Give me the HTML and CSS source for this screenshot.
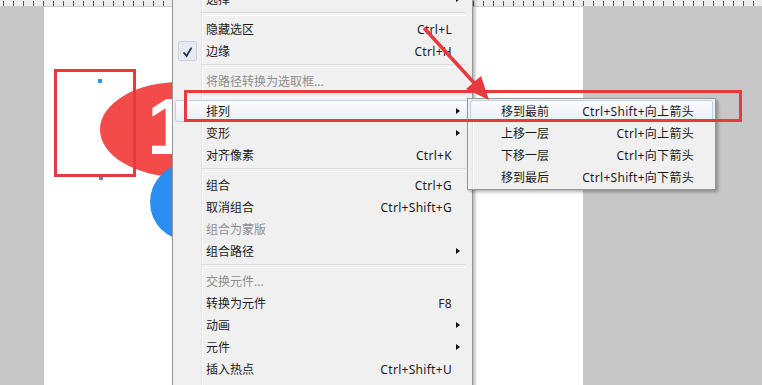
FILE: index.html
```html
<!DOCTYPE html>
<html lang="zh-CN">
<head>
    <meta charset="UTF-8">
    <title>排列</title>
    <link rel="stylesheet" href="styles.css">
</head>
<body>
    <div class="screen">
        <div class="ruler"></div>
        <div class="workspace">
            <div class="pasteboard left"></div>
            <div class="canvas">
                <div class="shape red-blob"></div>
                <div class="shape digit">1</div>
                <div class="shape blue-dot"></div>
                <span class="handle handle-top"></span>
                <span class="handle handle-bottom"></span>
            </div>
            <div class="pasteboard right"></div>
        </div>

        <ul class="menu main-menu">
            <li class="item"><span class="icon"></span><span class="label">选择</span><span class="key"></span><i class="arrow"></i></li>
            <li class="sep"></li>
            <li class="item"><span class="icon"></span><span class="label">隐藏选区</span><span class="key">Ctrl+L</span><i></i></li>
            <li class="item"><span class="icon"><span class="check"><svg width="17" height="18" viewBox="0 0 17 18"><path d="M4 9.5 L7.5 13.5 L13 4" fill="none" stroke="#1f2a6a" stroke-width="2"/></svg></span></span><span class="label">边缘</span><span class="key">Ctrl+H</span><i></i></li>
            <li class="sep"></li>
            <li class="item off"><span class="icon"></span><span class="label">将路径转换为选取框...</span><span class="key"></span><i></i></li>
            <li class="sep"></li>
            <li class="item hot"><span class="icon"></span><span class="label">排列</span><span class="key"></span><i class="arrow"></i></li>
            <li class="item"><span class="icon"></span><span class="label">变形</span><span class="key"></span><i class="arrow"></i></li>
            <li class="item"><span class="icon"></span><span class="label">对齐像素</span><span class="key">Ctrl+K</span><i></i></li>
            <li class="sep"></li>
            <li class="item"><span class="icon"></span><span class="label">组合</span><span class="key">Ctrl+G</span><i></i></li>
            <li class="item"><span class="icon"></span><span class="label">取消组合</span><span class="key">Ctrl+Shift+G</span><i></i></li>
            <li class="item off"><span class="icon"></span><span class="label">组合为蒙版</span><span class="key"></span><i></i></li>
            <li class="item"><span class="icon"></span><span class="label">组合路径</span><span class="key"></span><i class="arrow"></i></li>
            <li class="sep"></li>
            <li class="item off"><span class="icon"></span><span class="label">交换元件...</span><span class="key"></span><i></i></li>
            <li class="item"><span class="icon"></span><span class="label">转换为元件</span><span class="key">F8</span><i></i></li>
            <li class="item"><span class="icon"></span><span class="label">动画</span><span class="key"></span><i class="arrow"></i></li>
            <li class="item"><span class="icon"></span><span class="label">元件</span><span class="key"></span><i class="arrow"></i></li>
            <li class="item"><span class="icon"></span><span class="label">插入热点</span><span class="key">Ctrl+Shift+U</span><i></i></li>
        </ul>

        <ul class="menu sub-menu">
            <li class="sub-item hot"><span>移到最前</span><span class="key">Ctrl+Shift+向上箭头</span></li>
            <li class="sub-item"><span>上移一层</span><span class="key">Ctrl+向上箭头</span></li>
            <li class="sub-item"><span>下移一层</span><span class="key">Ctrl+向下箭头</span></li>
            <li class="sub-item"><span>移到最后</span><span class="key">Ctrl+Shift+向下箭头</span></li>
        </ul>

        <!-- 标注：红框和箭头 -->
        <svg class="marks" width="762" height="385" viewBox="0 0 762 385">
            <rect x="55.5" y="70.5" width="79" height="105" fill="none" stroke="#e8393e" stroke-width="3"/>
            <rect x="185.5" y="91.5" width="555" height="29" fill="none" stroke="#e8393e" stroke-width="3"/>
            <line x1="424" y1="28" x2="476" y2="85" stroke="#e8393e" stroke-width="3.5"/>
            <polygon points="489,100 466,89 481,76" fill="#e8393e"/>
        </svg>
    </div>
</body>
</html>
```

FILE: styles.css
```css
* {
    box-sizing: border-box;
    margin: 0;
    padding: 0;
}
body {
    width: 762px;
    height: 385px;
    overflow: hidden;
    background: #c7c7c7;
    font-family: "Noto Sans", "Noto Sans CJK SC", sans-serif;
    font-size: 12px;
    color: #1b1b1b;
}
.screen {
    position: relative;
    width: 762px;
    height: 385px;
    overflow: hidden;
}
.ruler {
    height: 7px;
    background: repeating-linear-gradient(to right, #555 0 1px, transparent 1px 10px) 3px 1px / 100% 6px no-repeat, #ededed;
    border-bottom: 1px solid #c9c9c9;
}
.workspace {
    display: flex;
    height: 378px;
}
.pasteboard {
    background: #c7c7c7;
}
.pasteboard.left {
    width: 44px;
}
.pasteboard.right {
    flex: 1;
}
.canvas {
    position: relative;
    width: 539px;
    background: #fff;
}
.shape {
    position: absolute;
}
.red-blob {
    left: 56px;
    top: 75px;
    width: 160px;
    height: 95px;
    border-radius: 50%;
    background: #f34a4a;
}
.digit {
    left: 103px;
    top: 80px;
    font-family: "Liberation Sans", sans-serif;
    font-weight: bold;
    font-size: 80px;
    line-height: 80px;
    color: #fff;
}
.blue-dot {
    left: 106px;
    top: 156px;
    width: 78px;
    height: 78px;
    border-radius: 50%;
    background: #2b8ef0;
}
.handle {
    position: absolute;
    width: 4px;
    height: 4px;
    background: #1b9be2;
}
.handle-top {
    left: 54px;
    top: 72px;
}
.handle-bottom {
    left: 55px;
    top: 170px;
    height: 3px;
    background: #5a86c0;
}

/* 右键菜单 */
.menu {
    position: absolute;
    list-style: none;
    border: 1px solid #979797;
    box-shadow: 2px 2px 3px rgba(0, 0, 0, .3);
}
.main-menu {
    left: 172px;
    top: -13px;
    width: 301px;
    height: 410px;
    padding: 0 2px;
    background: linear-gradient(to right, transparent 28px, #e2e3e3 28px 29px, #fff 29px 30px, transparent 30px), #f0f0f0;
}
.item {
    display: grid;
    grid-template-columns: 31px 1fr auto 18px;
    align-items: center;
    height: 22px;
    border-radius: 3px;
}
.item.off {
    color: #8e8e8e;
}
.item.hot,
.sub-item.hot {
    background: linear-gradient(#fcfdfe, #e9eef6);
    box-shadow: inset 0 0 0 1px #bccfe8;
}
.key {
    letter-spacing: .3px;
}
.arrow {
    width: 0;
    height: 0;
    margin-left: 4px;
    border-left: 4px solid #111;
    border-top: 3.5px solid transparent;
    border-bottom: 3.5px solid transparent;
}
.icon {
    height: 22px;
    display: flex;
    align-items: center;
}
.check {
    display: flex;
    width: 19px;
    height: 20px;
    margin-left: 3px;
    padding: 1px;
    border: 1px solid #c9d3e0;
    border-radius: 2px;
    background: #e7ebf1;
}
.sep {
    height: 8px;
    display: flex;
    align-items: center;
    padding: 0 4px 0 27px;
}
.sep::after {
    content: "";
    flex: 1;
    height: 2px;
    border-top: 1px solid #dcdcdc;
    border-bottom: 1px solid #fff;
}
.sub-menu {
    left: 467px;
    top: 98px;
    width: 249px;
    height: 92px;
    padding: 1px 2px;
    background: linear-gradient(to right, transparent 4px, #e2e3e3 4px 5px, #fff 5px 6px, transparent 6px), #f0f0f0;
}
.sub-item {
    display: flex;
    justify-content: space-between;
    align-items: center;
    height: 22px;
    padding: 0 19px 0 31px;
    border-radius: 3px;
}
.marks {
    position: absolute;
    left: 0;
    top: 0;
}
```
